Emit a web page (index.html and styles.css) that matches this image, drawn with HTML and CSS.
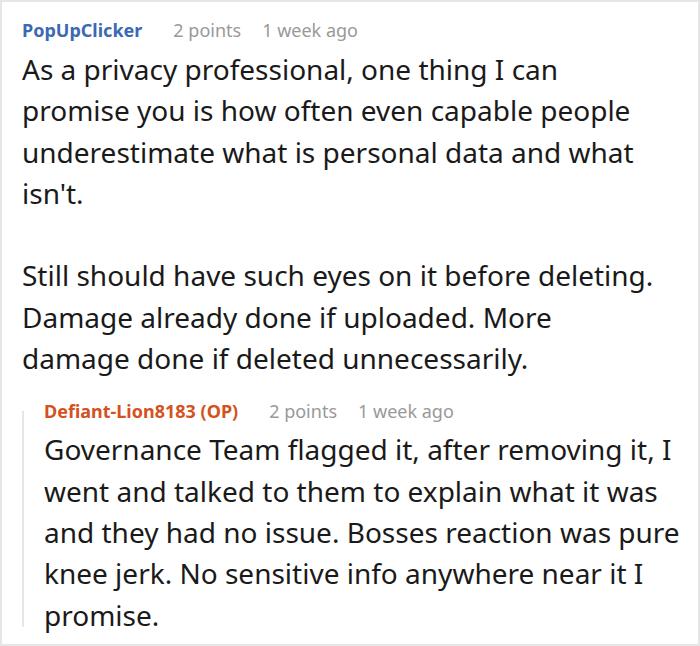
FILE: index.html
```html
<!DOCTYPE html>
<html>
<head>
<meta charset="utf-8">
<link rel="stylesheet" href="styles.css">
</head>
<body>
<div class="frame">
  <div class="comment">
    <div class="meta">
      <span class="author">PopUpClicker</span>
      <span class="info points">2 points</span>
      <span class="info">1 week ago</span>
    </div>
    <div class="body main-body">
      <p>As a privacy professional, one thing I can promise you is how often even capable people underestimate what is personal data and what isn't.</p>
      <p>Still should have such eyes on it before deleting. Damage already done if uploaded. More damage done if deleted unnecessarily.</p>
    </div>
    <div class="reply">
      <div class="thread-line"></div>
      <div class="reply-content">
        <div class="meta">
          <span class="author op">Defiant-Lion8183 (OP)</span>
          <span class="info points">2 points</span>
          <span class="info">1 week ago</span>
        </div>
        <div class="body reply-body">
          <p>Governance Team flagged it, after removing it, I went and talked to them to explain what it was and they had no issue. Bosses reaction was pure knee jerk. No sensitive info anywhere near it I promise.</p>
        </div>
      </div>
    </div>
  </div>
</div>
</body>
</html>
```
FILE: styles.css
```css
html, body {
  margin: 0;
  padding: 0;
  background: #fff;
}
.frame {
  width: 700px;
  height: 646px;
  box-sizing: border-box;
  border: 2px solid #e6e6e6;
  overflow: hidden;
  font-family: "Noto Sans", "Open Sans", sans-serif;
  color: #1a1a1a;
}
.comment {
  padding: 16px 0 0 20px;
}
.meta {
  display: flex;
  align-items: baseline;
  font-size: 18px;
  line-height: 24px;
  white-space: nowrap;
}
.author {
  font-weight: 700;
  font-size: 18px;
  color: #3b69b5;
  margin-right: 31px;
}
.author.op {
  color: #d4521e;
}
.info {
  color: #999;
}
.points {
  margin-right: 21px;
}
.body {
  font-size: 28px;
  line-height: 41.3px;
  margin-top: 7px;
}
.main-body {
  width: 636px;
}
.body p {
  margin: 0 0 41.3px 0;
}
.body p:last-child {
  margin-bottom: 0;
}
.reply {
  display: flex;
  margin-top: 20px;
}
.thread-line {
  width: 2px;
  flex: none;
  background: #e6e6e6;
  margin-top: 12px;
  margin-bottom: 9px;
}
.reply-content {
  padding-left: 20px;
}
.reply-body {
  width: 660px;
  margin-top: 6px;
}
```
